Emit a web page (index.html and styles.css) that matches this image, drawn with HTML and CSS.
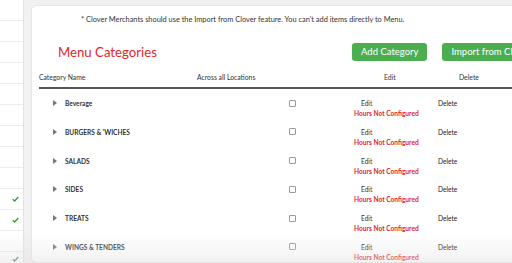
FILE: index.html
```html
<!DOCTYPE html>
<html>
  <head>
    <meta charset="UTF-8">
    <title>Menu Categories</title>
    <link rel="stylesheet" href="styles.css">
  </head>
  <body>
  <div id="page">
    <!-- left list, mostly cut off -->
    <div id="side">
      <div class="srow"></div><div class="srow"></div><div class="srow"></div><div class="srow"></div>
      <div class="srow"></div><div class="srow"></div><div class="srow"></div><div class="srow"></div>
      <div class="srow"></div>
      <div class="srow"><svg class="tick" viewBox="0 0 8 6"><path d="M0.8 3.2 L3 5.2 L7.2 0.8" /></svg></div>
      <div class="srow"><svg class="tick" viewBox="0 0 8 6"><path d="M0.8 3.2 L3 5.2 L7.2 0.8" /></svg></div>
      <div class="srow"></div>
      <div class="srow last"><svg class="tick" viewBox="0 0 8 6"><path d="M0.8 3.2 L3 5.2 L7.2 0.8" /></svg></div>
    </div>

    <div id="panel">
      <p class="note">* Clover Merchants should use the Import from Clover feature. You can't add items directly to Menu.</p>
      <div class="top">
        <h2>Menu Categories</h2>
        <button class="green">Add Category</button>
        <button class="green">Import from Clover</button>
      </div>

      <div class="grid head">
        <div>Category Name</div>
        <div class="h-loc">Across all Locations</div>
        <div class="h-edit">Edit</div>
        <div class="h-del">Delete</div>
      </div>

      <div class="grid row"><div class="name"><i class="tri"></i>Beverage</div><div class="loc"><span class="box"></span></div><div class="edit"><span class="e">Edit</span><span class="red">Hours Not Configured</span></div><div class="del">Delete</div></div>
      <div class="grid row"><div class="name"><i class="tri"></i>BURGERS &amp; 'WICHES</div><div class="loc"><span class="box"></span></div><div class="edit"><span class="e">Edit</span><span class="red">Hours Not Configured</span></div><div class="del">Delete</div></div>
      <div class="grid row"><div class="name"><i class="tri"></i>SALADS</div><div class="loc"><span class="box"></span></div><div class="edit"><span class="e">Edit</span><span class="red">Hours Not Configured</span></div><div class="del">Delete</div></div>
      <div class="grid row"><div class="name"><i class="tri"></i>SIDES</div><div class="loc"><span class="box"></span></div><div class="edit"><span class="e">Edit</span><span class="red">Hours Not Configured</span></div><div class="del">Delete</div></div>
      <div class="grid row"><div class="name"><i class="tri"></i>TREATS</div><div class="loc"><span class="box"></span></div><div class="edit"><span class="e">Edit</span><span class="red">Hours Not Configured</span></div><div class="del">Delete</div></div>
      <div class="grid row"><div class="name"><i class="tri"></i>WINGS &amp; TENDERS</div><div class="loc"><span class="box"></span></div><div class="edit"><span class="e">Edit</span><span class="red">Hours Not Configured</span></div><div class="del">Delete</div></div>
    </div>
  </div>
  <div id="fade"></div>
  </body>
</html>
```

FILE: styles.css
```css
/* page frame */
body {
  margin: 0;
  background-color: #f1f1f1;
  font-family: "Lato", "Open Sans", sans-serif;
  color: #333;
  overflow: hidden;
}
#page {
  display: flex;
  gap: 7px;
  height: 263px;
}
#side {
  width: 23px;
  flex-shrink: 0;
  background-color: #fff;
  border-right: 1px solid #e3e3e3;
}
.srow {
  height: 20px;
  border-bottom: 1px solid #ececec;
  display: flex;
  align-items: center;
  justify-content: flex-end;
  padding-right: 4px;
}
.last {
  align-items: flex-start;
  padding-top: 4px;
  box-sizing: border-box;
}
.tick {
  width: 7px;
  height: 6px;
  fill: none;
  stroke: #3c9a3c;
  stroke-width: 1.6;
}
#panel {
  margin-top: 5px;
  width: 560px;
  flex-shrink: 0;
  background-color: #fff;
  border: 1px solid #e6e6e6;
  border-radius: 5px;
  padding: 0 0 0 7px;
}
.note {
  margin: 9px 0 0 42px;
  font-size: 7.4px;
  line-height: 10px;
  color: #333;
}
.top {
  display: flex;
  align-items: center;
  margin-top: 17px;
  height: 19px;
}
h2 {
  margin: 0 0 0 19px;
  font-size: 13.2px;
  font-weight: normal;
  color: #e0262b;
  width: 294px;
}
button {
  border: none;
  border-radius: 3px;
  height: 18px;
  padding: 0 9px;
  font-family: inherit;
  font-size: 9.5px;
  color: #fff;
  margin-right: 15px;
}
.green {
  background-color: #4cae4f;
}
/* table */
.grid {
  display: grid;
  grid-template-columns: 158px 157px 84px 1fr;
}
.head {
  margin-top: 11px;
  font-size: 6.8px;
  line-height: 10px;
  padding-bottom: 5px;
  border-bottom: 2px solid #555;
}
.h-edit {
  padding-left: 30px;
}
.h-del {
  padding-left: 21px;
}
.row {
  height: 28.8px;
  padding-top: 9px;
  box-sizing: border-box;
  font-size: 6.6px;
  line-height: 10px;
}
.name {
  font-weight: bold;
  padding-left: 14px;
  display: flex;
  align-items: center;
  height: 10px;
}
.tri {
  width: 0;
  height: 0;
  border-top: 3.5px solid transparent;
  border-bottom: 3.5px solid transparent;
  border-left: 4px solid #777;
  margin-right: 8px;
}
.loc {
  padding-left: 92px;
  display: flex;
  align-items: center;
  height: 10px;
}
.box {
  width: 5px;
  height: 5px;
  border: 1px solid #9a9a9a;
  border-radius: 1px;
}
.edit {
  display: flex;
  flex-direction: column;
  align-items: flex-start;
}
.e {
  padding-left: 7px;
}
.red {
  color: #e0262b;
  font-weight: bold;
}
.del {
  color: #222;
}
/* video fade at the bottom */
#fade {
  position: fixed;
  left: 0;
  right: 0;
  bottom: 0;
  height: 30px;
  background: linear-gradient(rgba(225,225,225,0), rgba(225,225,225,0.45));
  pointer-events: none;
}
```
